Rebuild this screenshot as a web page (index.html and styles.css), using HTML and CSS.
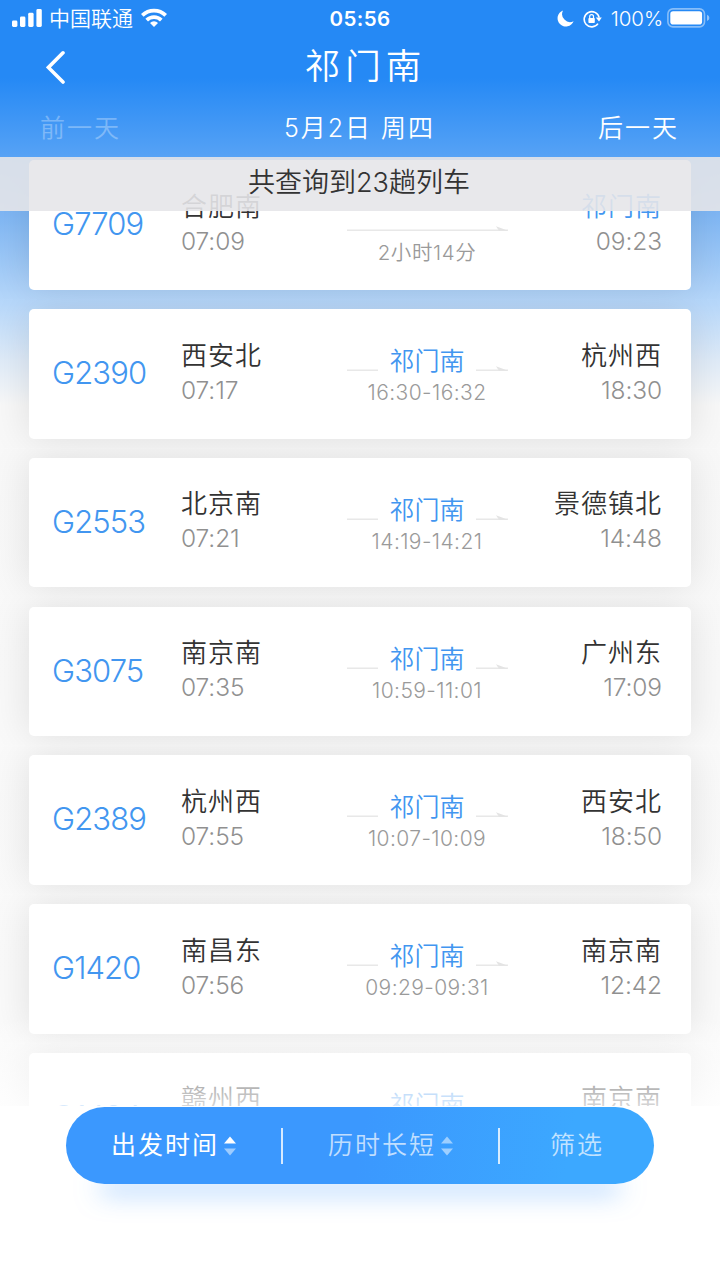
FILE: index.html
```
<!DOCTYPE html>
<html lang="zh-CN">
<head>
  <meta charset="UTF-8">
  <meta name="viewport" content="width=device-width, initial-scale=1.0">
  <title>祁门南</title>
  <link rel="stylesheet" href="styles.css">
</head>
<body>
  <svg class="sprite" width="0" height="0">
    <symbol id="arrow" viewBox="0 0 161 8">
      <path d="M0 6.2H161" stroke="#e8e8e8" stroke-width="1.6"/>
      <path d="M149 2.2L161 6.8H152Z" fill="#e4e4e4"/>
    </symbol>
  </svg>

  <div class="app">
    <header class="header">
      <div class="status">
        <div class="status-left">
          <svg width="30" height="18" viewBox="0 0 30 18" fill="#fff">
            <rect x="0" y="11.5" width="5.4" height="6.5" rx="1.4"/>
            <rect x="8" y="7.6" width="5.4" height="10.4" rx="1.4"/>
            <rect x="16.2" y="3.8" width="5.4" height="14.2" rx="1.4"/>
            <rect x="24.4" y="0" width="5.4" height="18" rx="1.4"/>
          </svg>
          <span class="carrier">中国联通</span>
          <svg class="wifi" width="26" height="19" viewBox="0 0 26 19" fill="none" stroke="#fff" stroke-width="3.7">
            <path d="M1.3 7.4a16.5 16.5 0 0 1 23.4 0"/>
            <path d="M5.7 12.1a10.3 10.3 0 0 1 14.6 0"/>
            <path d="M13 19L9 14.9a5.6 5.6 0 0 1 8 0Z" fill="#fff" stroke="none"/>
          </svg>
        </div>
        <span class="clock">05:56</span>
        <div class="status-right">
          <svg width="17" height="17" viewBox="0 0 17 17" fill="#fff">
            <path d="M6 .4A8.3 8.3 0 1 0 16.6 11.2A8 8 0 0 1 6 .4Z"/>
          </svg>
          <svg class="lock" width="19" height="18" viewBox="0 0 19 18">
            <path d="M15 13.6A7.6 7.6 0 1 1 16.2 7.6" fill="none" stroke="#fff" stroke-width="1.6"/>
            <path d="M12.8 7.6h6l-2.8 4z" fill="#fff"/>
            <rect x="5.4" y="8" width="6.4" height="5" rx=".8" fill="#fff"/>
            <path d="M6.7 8.2V6.6a1.9 1.9 0 0 1 3.8 0V8.2" fill="none" stroke="#fff" stroke-width="1.2"/>
          </svg>
          <span class="percent">100%</span>
          <svg class="battery" width="43" height="20" viewBox="0 0 43 20">
            <rect x=".9" y=".9" width="36.6" height="18" rx="5" fill="none" stroke="#fff" stroke-opacity=".45" stroke-width="1.6"/>
            <rect x="3.3" y="3.3" width="31.8" height="13.2" rx="2.8" fill="#fff"/>
            <path d="M40 6.8q2.4 1 2.4 3.1t-2.4 3.1z" fill="#fff" fill-opacity=".5"/>
          </svg>
        </div>
      </div>
      <div class="title-bar">
        <svg class="back" width="20" height="34" viewBox="0 0 20 34">
          <path d="M17 2.8L2.4 17.4L17 32" fill="none" stroke="#fff" stroke-width="3.6" stroke-linecap="round"/>
        </svg>
        <h1>祁门南</h1>
      </div>
      <nav class="days">
        <span class="day disabled">前一天</span>
        <span class="day">5月2日 周四</span>
        <span class="day next">后一天</span>
      </nav>
    </header>

    <main class="list">
      <div class="notice">共查询到23趟列车</div>

      <div class="train">
        <div class="code">G7709</div>
        <div class="from"><b>合肥南</b><span>07:09</span></div>
        <div class="via direct">
          <svg class="line" width="161" height="8"><use href="#arrow"/></svg>
          <span>2小时14分</span>
        </div>
        <div class="to"><b class="here">祁门南</b><span>09:23</span></div>
      </div>

      <div class="train">
        <div class="code">G2390</div>
        <div class="from"><b>西安北</b><span>07:17</span></div>
        <div class="via">
          <svg class="line" width="161" height="8"><use href="#arrow"/></svg>
          <em>祁门南</em><span>16:30-16:32</span>
        </div>
        <div class="to"><b>杭州西</b><span>18:30</span></div>
      </div>

      <div class="train">
        <div class="code">G2553</div>
        <div class="from"><b>北京南</b><span>07:21</span></div>
        <div class="via">
          <svg class="line" width="161" height="8"><use href="#arrow"/></svg>
          <em>祁门南</em><span>14:19-14:21</span>
        </div>
        <div class="to"><b>景德镇北</b><span>14:48</span></div>
      </div>

      <div class="train">
        <div class="code">G3075</div>
        <div class="from"><b>南京南</b><span>07:35</span></div>
        <div class="via">
          <svg class="line" width="161" height="8"><use href="#arrow"/></svg>
          <em>祁门南</em><span>10:59-11:01</span>
        </div>
        <div class="to"><b>广州东</b><span>17:09</span></div>
      </div>

      <div class="train">
        <div class="code">G2389</div>
        <div class="from"><b>杭州西</b><span>07:55</span></div>
        <div class="via">
          <svg class="line" width="161" height="8"><use href="#arrow"/></svg>
          <em>祁门南</em><span>10:07-10:09</span>
        </div>
        <div class="to"><b>西安北</b><span>18:50</span></div>
      </div>

      <div class="train">
        <div class="code">G1420</div>
        <div class="from"><b>南昌东</b><span>07:56</span></div>
        <div class="via">
          <svg class="line" width="161" height="8"><use href="#arrow"/></svg>
          <em>祁门南</em><span>09:29-09:31</span>
        </div>
        <div class="to"><b>南京南</b><span>12:42</span></div>
      </div>

      <div class="train">
        <div class="code">G1484</div>
        <div class="from"><b>赣州西</b></div>
        <div class="via">
          <em>祁门南</em>
        </div>
        <div class="to"><b>南京南</b></div>
      </div>
      <div class="fade"></div>
    </main>

    <footer class="footer">
      <div class="filters">
        <div class="filter active">出发时间
          <svg width="12" height="20" viewBox="0 0 12 20" fill="#fff"><path d="M0 7.5L6 .5L12 7.5Z"/><path d="M0 12.5L6 19.5L12 12.5Z" opacity=".5"/></svg>
        </div>
        <i></i>
        <div class="filter">历时长短
          <svg width="12" height="20" viewBox="0 0 12 20" fill="#fff"><path d="M0 7.5L6 .5L12 7.5Z" opacity=".5"/><path d="M0 12.5L6 19.5L12 12.5Z" opacity=".5"/></svg>
        </div>
        <i></i>
        <div class="filter last">筛选</div>
      </div>
    </footer>
  </div>
</body>
</html>
```
FILE: styles.css
```
* {
  margin: 0;
  padding: 0;
  box-sizing: border-box;
}

body {
  font-family: Inter, "Noto Sans CJK SC", sans-serif;
  font-weight: 350;
  background-color: #fff;
  overflow: hidden;
}

.sprite {
  position: absolute;
}

.app {
  width: 720px;
  height: 1280px;
  display: flex;
  flex-direction: column;
  background: linear-gradient(#2589f5 0, #2589f5 78px, #56a2f5 156px, #80b7f4 215px, #b8d8fa 305px, #dfebf8 360px, #f8f8f8 405px, #fbfbfb 100%);
}

/* header */
.header {
  height: 157px;
  color: #fff;
}

.status {
  height: 37px;
  padding: 0 10px 0 12px;
  display: grid;
  grid-template-columns: 1fr auto 1fr;
  align-items: center;
}

.status-left, .status-right {
  display: flex;
  align-items: center;
}

.status-left {
  padding-bottom: 1px;
}

.status-right {
  justify-content: flex-end;
}

.carrier {
  margin: 1px 0 0 7px;
  font-size: 21px;
  line-height: 30px;
}

.wifi {
  margin: 0 0 2px 8px;
}

.clock {
  margin-right: 2px;
  font-size: 20.5px;
  font-weight: 600;
  letter-spacing: 0.4px;
}

.lock {
  margin-left: 9px;
}

.percent {
  margin-left: 9px;
  font-size: 20.5px;
  letter-spacing: -0.1px;
}

.battery {
  margin: 0 0 2px 4px;
}

.title-bar {
  height: 60px;
  padding: 0 46px;
  display: grid;
  grid-template-columns: 1fr auto 1fr;
  align-items: center;
}

h1 {
  font-size: 35.5px;
  line-height: 50px;
  font-weight: 350;
  letter-spacing: 5px;
  padding-left: 11px;
}

.days {
  height: 60px;
  padding: 1px 41px 0 40px;
  display: grid;
  grid-template-columns: 1fr auto 1fr;
  align-items: center;
}

.day {
  font-size: 25px;
  line-height: 36px;
  letter-spacing: 2px;
}

.next {
  text-align: right;
}

.disabled {
  opacity: 0.3;
}

/* trains */
.list {
  position: relative;
  height: 949px;
  padding: 3.3px 29px 0;
  display: flex;
  flex-direction: column;
  gap: 19.2px;
  overflow: hidden;
}

.notice {
  position: absolute;
  top: 0;
  left: 0;
  z-index: 2;
  width: 100%;
  height: 53.5px;
  padding-right: 2px;
  background: rgba(229, 229, 233, 0.9);
  color: #333;
  font-size: 27px;
  line-height: 52px;
  text-align: center;
}

/* clipped so a card's shadow never falls on its neighbours */
.train {
  height: 129.6px;
  flex: none;
  padding: 0 29px 0 23px;
  display: grid;
  grid-template-columns: 129px 130px 1fr 130px;
  background: #fff;
  border-radius: 5px;
  box-shadow: 0 0 40px rgba(0, 0, 0, 0.11);
  clip-path: inset(-9.6px -29px);
}

.code {
  font-size: 31px;
  line-height: 127px;
  letter-spacing: -0.9px;
  color: #4296f0;
}

.from, .to {
  display: flex;
  flex-direction: column;
  padding-top: 27.5px;
}

.to {
  align-items: flex-end;
}

b {
  font-size: 26px;
  line-height: 38px;
  font-weight: 350;
  letter-spacing: 1px;
  color: #333;
  white-space: nowrap;
}

.from span, .to span {
  margin-top: -2px;
  font-size: 24.5px;
  line-height: 34px;
  color: #909090;
  letter-spacing: -0.1px;
}

b.here {
  color: #4296f0;
}

.via {
  position: relative;
  left: 5.5px;
  display: flex;
  flex-direction: column;
  align-items: center;
  padding-top: 34px;
}

.line {
  position: absolute;
  top: 55px;
  left: calc(50% - 80px);
}

.via em {
  position: relative;
  padding: 0 11.5px;
  background: #fff;
  font-size: 25px;
  line-height: 36px;
  font-style: normal;
  color: #4296f0;
}

.via span {
  font-size: 21px;
  line-height: 28px;
  color: #9a9a9a;
  letter-spacing: 0.4px;
}

.direct {
  padding-top: 79px;
}

.direct .line {
  top: 64px;
}

.direct span {
  font-size: 20.5px;
  letter-spacing: 0.6px;
}

.fade {
  position: absolute;
  left: 0;
  bottom: 0;
  width: 100%;
  height: 90px;
  background: linear-gradient(rgba(255, 255, 255, 0), rgba(255, 255, 255, 0.8));
}

/* bottom filters */
.footer {
  flex: 1;
  padding: 1px 66px 0;
  background: #fff;
  position: relative;
}

.filters {
  height: 77px;
  display: flex;
  align-items: center;
  border-radius: 39px;
  background: linear-gradient(100deg, #3b98fe 50%, #3ca8ff 85%);
  box-shadow: 0 42px 26px -34px rgba(60, 150, 255, 0.6);
}

.filter {
  flex: 1;
  display: flex;
  align-items: center;
  justify-content: center;
  gap: 5px;
  padding-bottom: 1px;
  color: rgba(255, 255, 255, 0.7);
  font-size: 25px;
  line-height: 36px;
  letter-spacing: 2px;
}

.filter svg {
  position: relative;
  top: 1px;
}

.filter.active {
  color: #fff;
  font-weight: 400;
}

.filter.last {
  flex: 0 0 154px;
}

.filters i {
  width: 2px;
  height: 36px;
  background: rgba(255, 255, 255, 0.8);
}
```
